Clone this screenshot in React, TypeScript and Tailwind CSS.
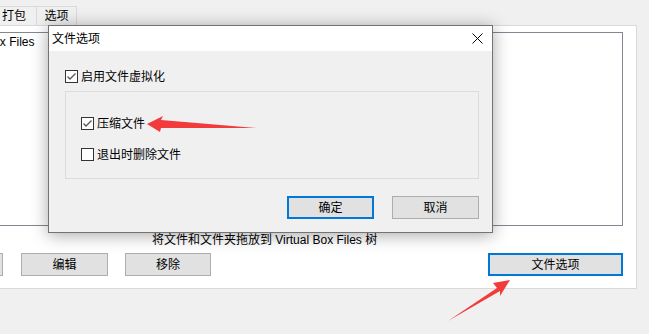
import React from "react";

const font = { fontFamily: '"Liberation Sans", "Noto Sans CJK SC", sans-serif' };

function Check({ checked }: { checked: boolean }) {
  return (
    <svg width="13" height="13" viewBox="0 0 13 13" className="shrink-0">
      <rect x="0.5" y="0.5" width="12" height="12" fill="#fff" stroke="#333" />
      {checked && (
        <path d="M2.5 6.5 L5 9 L10.5 3.5" fill="none" stroke="#555" strokeWidth="1.3" />
      )}
    </svg>
  );
}

function Btn({ label, w, focus }: { label: string; w: string; focus?: boolean }) {
  return (
    <div
      className={`${w} h-[23px] flex items-center justify-center bg-[#e1e1e1] text-[12px] text-black ${
        focus ? "border-2 border-[#0078d7]" : "border border-[#adadad]"
      }`}
    >
      {label}
    </div>
  );
}

export default function App() {
  return (
    <div className="relative w-[649px] h-[334px] overflow-hidden bg-[#f0f0f0] text-[12px] text-black" style={font}>
      {/* tab strip */}
      <div className="h-[25px] flex items-end">
        <div className="w-[37px] h-[19px] border-t border-r border-[#d9d9d9] flex items-center pl-[2px]">打包</div>
        <div className="w-[40px] h-[19px] border-t border-r border-[#d9d9d9] flex items-center justify-center">选项</div>
      </div>
      {/* panel */}
      <div className="w-[637px] h-[264px] bg-white border-t border-r border-b border-[#d9d9d9] flex flex-col pt-[6px] pr-[13px]">
        <div className="ml-[-60px] w-[683px] h-[194px] border border-[#828790] bg-white pt-[1px]">
          <div className="h-[16px] leading-[16px] pl-[7px]">Virtual Box Files</div>
        </div>
        <div className="h-[26px] flex items-center pl-[152px] pt-[1px]">将文件和文件夹拖放到 Virtual Box Files 树</div>
        <div className="flex items-center h-[23px] mt-[1px]">
          <div className="ml-[-84px] mr-[18px]">
            <Btn label="添加" w="w-[87px]" />
          </div>
          <Btn label="编辑" w="w-[87px]" />
          <div className="ml-[17px]">
            <Btn label="移除" w="w-[86px]" />
          </div>
          <div className="ml-auto">
            <Btn label="文件选项" w="w-[135px]" focus />
          </div>
        </div>
      </div>

      {/* dialog */}
      <div className="absolute left-[48px] top-[25px] w-[445px] h-[208px] border border-[#737373] bg-[#f0f0f0] shadow-[0_2px_16px_rgba(0,0,0,0.35)] flex flex-col">
        <div className="h-[25px] bg-white flex items-center justify-between pl-[3px] pr-[9px]">
          <span>文件选项</span>
          <svg width="11" height="11" viewBox="0 0 11 11">
            <path d="M0.5 0.5 L10.5 10.5 M10.5 0.5 L0.5 10.5" stroke="#000" strokeWidth="1" />
          </svg>
        </div>
        <div className="flex-1 flex flex-col pl-[16px] pr-[13px]">
          <div className="flex items-center gap-[3px] mt-[19px] h-[13px]">
            <Check checked />
            <span>启用文件虚拟化</span>
          </div>
          <div className="mt-[8px] h-[88px] border border-[#dcdcdc] flex flex-col pl-[15px]">
            <div className="flex items-center gap-[3px] mt-[25px] h-[13px]">
              <Check checked />
              <span>压缩文件</span>
            </div>
            <div className="flex items-center gap-[3px] mt-[18px] h-[13px]">
              <Check checked={false} />
              <span>退出时删除文件</span>
            </div>
          </div>
          <div className="flex justify-end gap-[18px] mt-[17px]">
            <Btn label="确定" w="w-[87px]" focus />
            <Btn label="取消" w="w-[87px]" />
          </div>
        </div>
      </div>

      {/* red arrows */}
      <svg className="absolute left-0 top-0 pointer-events-none" width="649" height="334" viewBox="0 0 649 334">
        <polygon points="147,124 163,116 161,120 257,128 161,128 160,132" fill="#f23b3b" />
        <polygon points="510,280 493,283 497,288 448,321 500,291 500,296" fill="#f23b3b" />
      </svg>
    </div>
  );
}
